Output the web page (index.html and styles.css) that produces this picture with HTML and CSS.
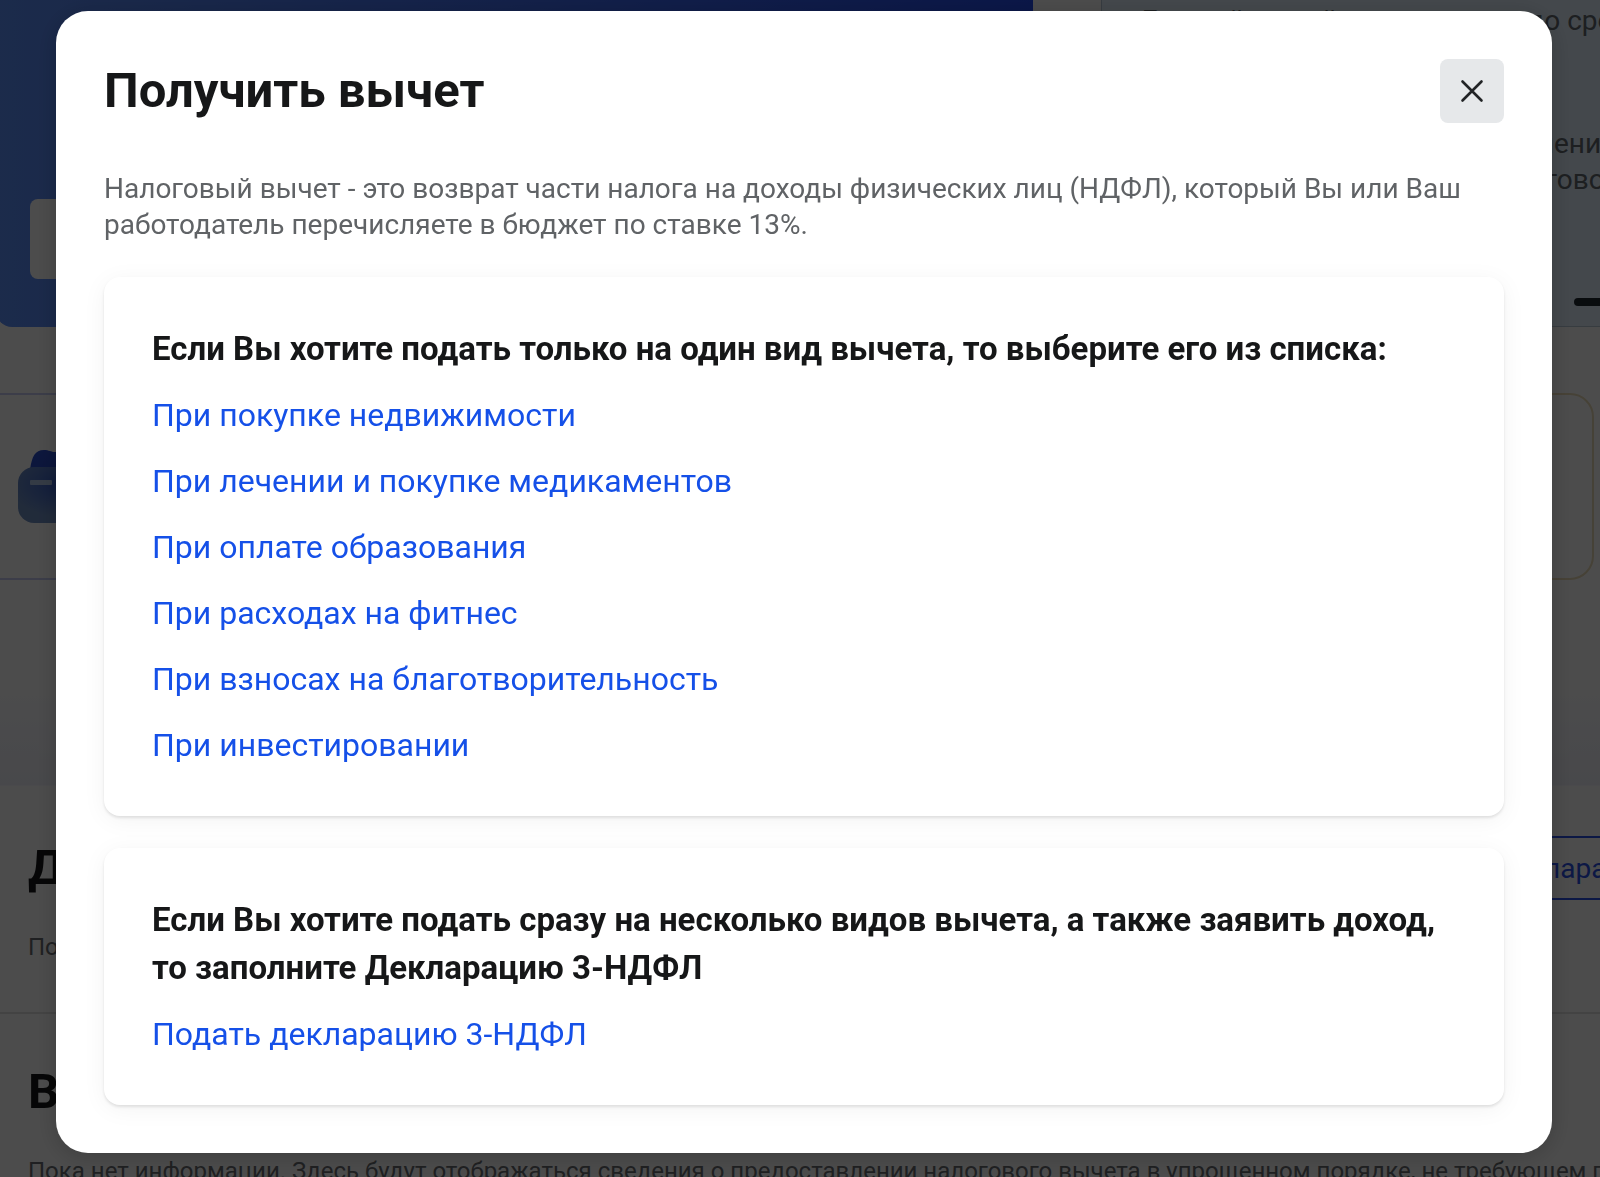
FILE: index.html
```html
<!DOCTYPE html>
<html lang="ru">
<head>
<meta charset="utf-8">
<meta name="viewport" content="width=device-width, initial-scale=1">
<title>Получить вычет</title>
<link rel="stylesheet" href="styles.css">
</head>
<body>
<main class="page">
  <section class="hero">
    <div class="banner"><button class="banner-button" type="button" aria-label="Подробнее"></button></div>
    <div class="notice">
      <p class="notice-title">Единый новый период уплат до срока</p>
      <p class="notice-text">Подайте заявление на определение<br>суммы остатка по счётам и договорам</p>
      <span class="notice-bar"></span>
    </div>
  </section>
  <section class="tiles">
    <div class="tile tile-blue">
      <svg class="tile-icon" width="96" height="96" viewBox="0 0 96 96" aria-hidden="true">
        <defs>
          <linearGradient id="back" x1="0" y1="0" x2="1" y2="1"><stop offset="0" stop-color="#2c50d0"/><stop offset="1" stop-color="#2340b8"/></linearGradient>
          <radialGradient id="front" cx=".5" cy=".3" r=".6"><stop offset="0" stop-color="#3058c8"/><stop offset="1" stop-color="#7090c4"/></radialGradient>
        </defs>
        <path d="M12 22C14 8 17 2 26 2C31 2 33 4 37 4H84V30H12Z" fill="url(#back)"/>
        <rect y="19" width="96" height="56" rx="16" fill="url(#front)"/>
        <rect x="12" y="32" width="22" height="5" rx="1" fill="#b0c6e6"/>
      </svg>
    </div>
    <div class="tile"></div>
    <div class="tile tile-yellow"></div>
  </section>
  <section class="block">
    <div class="block-head">
      <h2 class="block-title">Декларации</h2>
      <button class="outline-button" type="button">Подать декларацию</button>
    </div>
    <p class="block-text">Поданные декларации</p>
  </section>
  <section class="block">
    <h2 class="block-title">Вычеты</h2>
    <p class="block-text">Пока нет информации. Здесь будут отображаться сведения о предоставлении налогового вычета в упрощенном порядке, не требующем подачи декларации</p>
  </section>
</main>

<div class="overlay">
  <div class="modal" role="dialog" aria-modal="true" aria-labelledby="modal-title">
    <header class="modal-head">
      <h1 class="modal-title" id="modal-title">Получить вычет</h1>
      <button class="close" type="button" aria-label="Закрыть">
        <svg width="24" height="24" viewBox="0 0 24 24" fill="none" stroke="#222426" stroke-width="2.6" stroke-linecap="round" aria-hidden="true"><path d="M2.500 2.500L21.500 21.500M21.500 2.500L2.500 21.500"/></svg>
      </button>
    </header>
    <p class="lead">Налоговый вычет - это возврат части налога на доходы физических лиц (НДФЛ), который Вы или Ваш работодатель перечисляете в бюджет по ставке 13%.</p>
    <div class="cards">
      <section class="card">
        <h2 class="card-title">Если Вы хотите подать только на один вид вычета, то выберите его из списка:</h2>
        <a class="link" href="#property">При покупке недвижимости</a>
        <a class="link" href="#medical">При лечении и покупке медикаментов</a>
        <a class="link" href="#education">При оплате образования</a>
        <a class="link" href="#fitness">При расходах на фитнес</a>
        <a class="link" href="#charity">При взносах на благотворительность</a>
        <a class="link" href="#invest">При инвестировании</a>
      </section>
      <section class="card">
        <h2 class="card-title">Если Вы хотите подать сразу на несколько видов вычета, а также заявить доход, то заполните Декларацию 3-НДФЛ</h2>
        <a class="link" href="#declaration">Подать декларацию 3-НДФЛ</a>
      </section>
    </div>
  </div>
</div>
</body>
</html>
```
FILE: styles.css
```css
* { box-sizing: border-box; }
body, h1, h2, p { margin: 0; }
body {
  height: 100vh;
  overflow: hidden;
  background: #fff;
  color: #161718;
  font-family: Roboto, "Liberation Sans", sans-serif;
}
button { font: inherit; border: 0; padding: 0; }

/* Page under the dialog */
.page {
  height: 100vh;
  overflow: hidden;
}
.hero {
  display: grid;
  grid-template-columns: 2fr 1fr;
  gap: 68px;
  margin: 0 -19px 0 -4px;
}
.banner {
  display: flex;
  align-items: flex-end;
  height: 327px;
  padding: 48px 34px;
  border-radius: 0 0 16px 16px;
  background: linear-gradient(90deg, #5e90fa, #254df0);
}
.banner-button {
  width: 240px;
  height: 80px;
  border-radius: 8px;
  background: #fff;
}
.notice {
  display: flex;
  flex-direction: column;
  min-width: 0;
  padding: 3px 40px 20px;
  border: 1px solid #b8c8d8;
  border-top: 0;
  background: #e4f2ff;
  color: #62686e;
  font-size: 28px;
  line-height: 36px;
  white-space: nowrap;
}
.notice-text { margin-top: 87px; }
.notice-bar {
  align-self: flex-end;
  width: 40px;
  height: 8px;
  margin-top: auto;
  margin-right: -36px;
  border-radius: 4px;
  background: #202830;
}
.tiles {
  display: grid;
  grid-template-columns: repeat(3, 1fr);
  gap: 32px;
  margin: 66px 6px 0 -40px;
}
.tile {
  height: 187px;
  padding: 53px 56px;
  border: 2px solid #c8cdf5;
  border-radius: 24px;
}
.tile-yellow { border-color: #ecdcb8; }
.block {
  padding: 46px 0 0 28px;
  border-top: 2px solid #e2e2e2;
  white-space: nowrap;
}
.tiles + .block {
  height: 432px;
  padding-top: 256px;
  border-top: 0;
  background: linear-gradient(#fff 100px, #f1f2fb 205px, #fff 206px);
}
.block-head {
  display: flex;
  align-items: center;
  justify-content: space-between;
}
.block-title { font-size: 49px; line-height: 64px; }
.block-text { margin-top: 31px; color: #6a6d72; font-size: 24px; line-height: 32px; }
.outline-button {
  height: 64px;
  margin-right: -112px;
  padding: 0 48px;
  border: 2px solid #2b50e8;
  border-radius: 8px;
  background: none;
  color: #2b50e8;
  font-size: 28px;
}

/* Dialog */
.overlay {
  position: fixed;
  inset: 0;
  overflow: auto;
  padding: 11px 48px 22px 56px;
  background: rgba(0, 0, 0, .7);
}
.modal {
  padding: 48px;
  border-radius: 32px;
  background: #fff;
  box-shadow: 0 4px 24px rgba(0, 0, 0, .2);
}
.modal-head {
  display: flex;
  align-items: center;
  justify-content: space-between;
}
.modal-title { font-size: 49px; line-height: 64px; }
.close {
  display: grid;
  place-items: center;
  width: 64px;
  height: 64px;
  border-radius: 8px;
  background: #e6e8ea;
}
.lead {
  margin: 48px 0 34px;
  color: #606366;
  font-size: 28px;
  line-height: 36px;
}
.cards { display: grid; gap: 32px; }
.card {
  display: flex;
  flex-direction: column;
  align-items: flex-start;
  gap: 18px;
  padding: 48px 48px 47px;
  border-radius: 16px;
  background: #fff;
  box-shadow: 0 2px 3px rgba(0, 0, 0, .1), 0 4px 24px rgba(0, 0, 0, .05);
}
.card-title { font-size: 33px; line-height: 48px; }
.link {
  color: #1550e8;
  font-size: 32px;
  line-height: 48px;
  text-decoration: none;
}
```
